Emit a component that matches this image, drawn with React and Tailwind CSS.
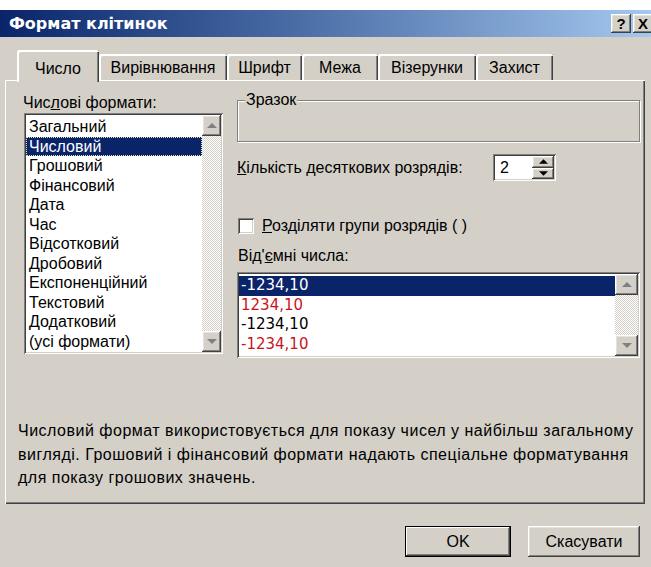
import React from 'react';

// classic 3D bevels
const raised =
  'shadow-[inset_-1px_-1px_#404040,inset_1px_1px_#ffffff,inset_-2px_-2px_#808080,inset_2px_2px_#e4e2dc]';
const sunken =
  'shadow-[inset_1px_1px_#808080,inset_-1px_-1px_#ffffff,inset_2px_2px_#404040,inset_-2px_-2px_#d4d0c8]';
const defaultBtn =
  'shadow-[inset_1px_1px_#000000,inset_-1px_-1px_#000000,inset_-2px_-2px_#404040,inset_2px_2px_#ffffff,inset_-3px_-3px_#808080]';
const dither = 'bg-[repeating-conic-gradient(#ffffff_0_25%,#d4d0c8_0_50%)] bg-[length:2px_2px]';

const tabs = [
  { label: 'Число', w: 'w-[82px]', active: true },
  { label: 'Вирівнювання', w: 'w-[128px]' },
  { label: 'Шрифт', w: 'w-[75px]' },
  { label: 'Межа', w: 'w-[76px]' },
  { label: 'Візерунки', w: 'w-[98px]' },
  { label: 'Захист', w: 'w-[77px]' },
];

const formats = [
  'Загальний',
  'Числовий',
  'Грошовий',
  'Фінансовий',
  'Дата',
  'Час',
  'Відсотковий',
  'Дробовий',
  'Експоненційний',
  'Текстовий',
  'Додатковий',
  '(усі формати)',
];

const negatives = [
  { text: '-1234,10', selected: true },
  { text: '1234,10', red: true },
  { text: '-1234,10' },
  { text: '-1234,10', red: true },
];

function Arrow({ up, fill = '#808080', w = 10, h = 5 }) {
  return (
    <svg width={w} height={h} viewBox="0 0 10 5">
      <path d={up ? 'M5 0 L10 5 L0 5 Z' : 'M0 0 L10 0 L5 5 Z'} fill={fill} />
    </svg>
  );
}

function ScrollBar({ w }) {
  return (
    <div className={`flex flex-col h-full ${w}`}>
      <div className={`h-[21px] bg-[#d4d0c8] flex items-center justify-center ${raised}`}>
        <Arrow up />
      </div>
      <div className={`flex-1 ${dither}`} />
      <div className={`h-[21px] bg-[#d4d0c8] flex items-center justify-center ${raised}`}>
        <Arrow />
      </div>
    </div>
  );
}

function TitleBar() {
  return (
    <div className="h-[27px] flex items-center justify-between pl-[9px] bg-gradient-to-r from-[#0a246a] to-[#a6caf0]">
      <span className="text-white font-bold font-['DejaVu_Sans',sans-serif] text-[16px] leading-none">
        Формат клітинок
      </span>
      <div className="flex gap-[2px] mr-[5px]">
        <div className={`w-[20px] h-[19px] bg-[#d4d0c8] flex items-center justify-center font-bold text-[15px] leading-none ${raised}`}>
          ?
        </div>
        <div className={`w-[20px] h-[19px] bg-[#d4d0c8] flex items-center justify-center font-bold text-[15px] leading-none ${raised}`}>
          X
        </div>
      </div>
    </div>
  );
}

function Tabs() {
  return (
    <div className="flex items-end h-[30px] pl-[12px]">
      {tabs.map((t) =>
        t.active ? (
          <div
            key={t.label}
            className={`${t.w} h-[32px] -mb-[2px] relative z-10 bg-[#d4d0c8] pt-[10px] text-center leading-[18px] rounded-t-[2px] shadow-[inset_2px_2px_#ffffff,inset_-1px_0_#404040,inset_-2px_0_#808080]`}
          >
            {t.label}
          </div>
        ) : (
          <div
            key={t.label}
            className={`${t.w} h-[26px] pt-[5px] text-center leading-[18px] rounded-t-[2px] shadow-[inset_2px_2px_#ffffff,inset_-1px_0_#404040,inset_-2px_0_#808080]`}
          >
            {t.label}
          </div>
        )
      )}
    </div>
  );
}

function FormatList() {
  return (
    <div className="ml-[6px] w-[199px] shrink-0">
      <div className="h-[18px] leading-[18px] -ml-[1px]">
        Чис<span className="underline">л</span>ові формати:
      </div>
      <div className={`mt-[1px] h-[241px] bg-white p-[2px] flex ${sunken}`}>
        <div className="flex-1 pt-[2px]">
          {formats.map((f, i) => (
            <div
              key={f}
              className={
                i === 1
                  ? 'h-[19.5px] leading-[19.5px] pl-[3px] bg-[#0a246a] text-white outline-1 outline-dotted outline-[#e8e4b0] -outline-offset-1'
                  : 'h-[19.5px] leading-[19.5px] pl-[3px]'
              }
            >
              {f}
            </div>
          ))}
        </div>
        <ScrollBar w="w-[19px]" />
      </div>
    </div>
  );
}

function Spinner() {
  return (
    <div className={`w-[63px] h-[27px] bg-white p-[2px] flex ${sunken}`}>
      <div className="flex-1 pl-[5px] leading-[23px]">2</div>
      <div className="w-[22px] flex flex-col">
        <div className={`flex-1 bg-[#d4d0c8] flex items-center justify-center ${raised}`}>
          <Arrow up fill="#000" w={9} h={5} />
        </div>
        <div className={`flex-1 bg-[#d4d0c8] flex items-center justify-center ${raised}`}>
          <Arrow fill="#000" w={9} h={5} />
        </div>
      </div>
    </div>
  );
}

function NegativeList() {
  return (
    <div className={`mt-[7px] h-[86px] bg-white p-[2px] flex ${sunken}`}>
      <div className="flex-1 pt-[2px] font-['DejaVu_Sans',sans-serif] text-[15px]">
        {negatives.map((n, i) => (
          <div
            key={i}
            className={
              n.selected
                ? 'h-[19.5px] leading-[19.5px] pl-[2px] bg-[#0a246a] text-white'
                : n.red
                ? 'h-[19.5px] leading-[19.5px] pl-[2px] text-[#c8141c]'
                : 'h-[19.5px] leading-[19.5px] pl-[2px]'
            }
          >
            {n.text}
          </div>
        ))}
      </div>
      <ScrollBar w="w-[23px]" />
    </div>
  );
}

function NumberOptions() {
  return (
    <div className="ml-[14px] flex-1 flex flex-col">
      {/* sample groupbox */}
      <div className="relative mt-[6px] h-[42px] border border-[#808080] shadow-[inset_1px_1px_#ffffff,1px_1px_#ffffff]">
        <span className="absolute -top-[10px] left-[7px] px-[1px] bg-[#d4d0c8] leading-[18px]">Зразок</span>
      </div>

      <div className="mt-[12px] h-[27px] flex items-center">
        <div className="w-[256px] leading-[18px]">
          <span className="underline">К</span>ількість десяткових розрядів:
        </div>
        <Spinner />
      </div>

      <div className="mt-[36px] h-[17px] flex items-center">
        <div className={`ml-[1px] w-[16px] h-[16px] bg-white ${sunken}`} />
        <span className="ml-[8px] leading-[18px]">
          <span className="underline">Р</span>озділяти групи розрядів ( )
        </span>
      </div>

      <div className="mt-[13px] h-[18px] leading-[18px] pl-[1px]">
        Від'<span className="underline">є</span>мні числа:
      </div>

      <NegativeList />
    </div>
  );
}

function Panel() {
  return (
    <div className="h-[424px] mr-[13px] flex flex-col pl-[13px] pr-[5px] pt-[14px] shadow-[inset_1px_1px_#ffffff,inset_-1px_-1px_#404040,inset_-2px_-2px_#808080]">
      <div className="flex">
        <FormatList />
        <NumberOptions />
      </div>
      <p className="mt-[61px] leading-[23.5px] tracking-[0.5px] whitespace-nowrap">
        Числовий формат використовується для показу чисел у найбільш загальному
        <br />
        вигляді. Грошовий і фінансовий формати надають спеціальне форматування
        <br />
        для показу грошових значень.
      </p>
    </div>
  );
}

function Footer() {
  return (
    <div className="flex justify-end gap-[17px] pt-[22px] pr-[18px]">
      <button className={`w-[106px] h-[31px] bg-[#d4d0c8] ${defaultBtn}`}>OK</button>
      <button className={`w-[112px] h-[31px] bg-[#d4d0c8] ${raised}`}>Скасувати</button>
    </div>
  );
}

export default function App() {
  return (
    <div className="w-[651px] h-[567px] overflow-hidden bg-white pt-[10px] font-['Liberation_Sans',Arial,sans-serif] text-[16px] text-black">
      <div className="w-[658px] h-[557px] bg-[#d4d0c8] flex flex-col">
        <TitleBar />
        <div className="flex flex-col pl-[5px] pt-[13px]">
          <Tabs />
          <Panel />
          <Footer />
        </div>
      </div>
    </div>
  );
}
